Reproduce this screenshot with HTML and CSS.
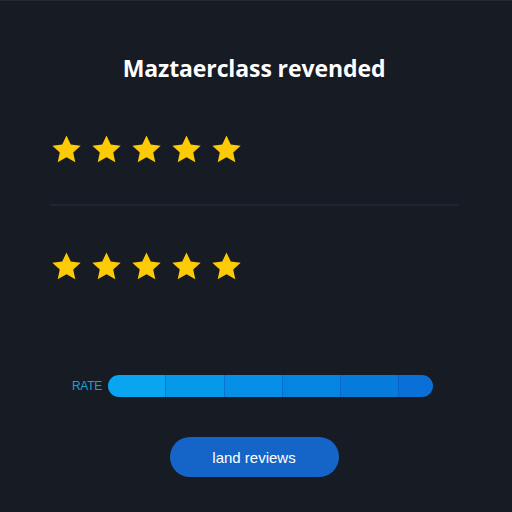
FILE: index.html
```html
<!DOCTYPE html>
<html lang="en">
<head>
    <meta charset="UTF-8">
    <meta name="viewport" content="width=device-width, initial-scale=1.0">
    <title>Masterclass reviews</title>
    <link rel="stylesheet" href="styles.css">
</head>
<body>
<div class="panel">
    <h1 class="title">Maztaerclass revended</h1>

    <div class="stars">
        <svg viewBox="0 0 24 24"><path d="M12 1.8l3.1 6.6 7.2.8-5.4 4.9 1.5 7.1L12 17.6l-6.4 3.6 1.5-7.1-5.4-4.9 7.2-.8z"/></svg>
        <svg viewBox="0 0 24 24"><path d="M12 1.8l3.1 6.6 7.2.8-5.4 4.9 1.5 7.1L12 17.6l-6.4 3.6 1.5-7.1-5.4-4.9 7.2-.8z"/></svg>
        <svg viewBox="0 0 24 24"><path d="M12 1.8l3.1 6.6 7.2.8-5.4 4.9 1.5 7.1L12 17.6l-6.4 3.6 1.5-7.1-5.4-4.9 7.2-.8z"/></svg>
        <svg viewBox="0 0 24 24"><path d="M12 1.8l3.1 6.6 7.2.8-5.4 4.9 1.5 7.1L12 17.6l-6.4 3.6 1.5-7.1-5.4-4.9 7.2-.8z"/></svg>
        <svg viewBox="0 0 24 24"><path d="M12 1.8l3.1 6.6 7.2.8-5.4 4.9 1.5 7.1L12 17.6l-6.4 3.6 1.5-7.1-5.4-4.9 7.2-.8z"/></svg>
    </div>

    <hr class="divider">

    <div class="stars second">
        <svg viewBox="0 0 24 24"><path d="M12 1.8l3.1 6.6 7.2.8-5.4 4.9 1.5 7.1L12 17.6l-6.4 3.6 1.5-7.1-5.4-4.9 7.2-.8z"/></svg>
        <svg viewBox="0 0 24 24"><path d="M12 1.8l3.1 6.6 7.2.8-5.4 4.9 1.5 7.1L12 17.6l-6.4 3.6 1.5-7.1-5.4-4.9 7.2-.8z"/></svg>
        <svg viewBox="0 0 24 24"><path d="M12 1.8l3.1 6.6 7.2.8-5.4 4.9 1.5 7.1L12 17.6l-6.4 3.6 1.5-7.1-5.4-4.9 7.2-.8z"/></svg>
        <svg viewBox="0 0 24 24"><path d="M12 1.8l3.1 6.6 7.2.8-5.4 4.9 1.5 7.1L12 17.6l-6.4 3.6 1.5-7.1-5.4-4.9 7.2-.8z"/></svg>
        <svg viewBox="0 0 24 24"><path d="M12 1.8l3.1 6.6 7.2.8-5.4 4.9 1.5 7.1L12 17.6l-6.4 3.6 1.5-7.1-5.4-4.9 7.2-.8z"/></svg>
    </div>

    <div class="rate">
        <span class="rate-label">RATE</span>
        <div class="rate-bar">
            <span class="seg s1"></span>
            <span class="seg s2"></span>
            <span class="seg s3"></span>
            <span class="seg s4"></span>
            <span class="seg s5"></span>
            <span class="seg s6"></span>
        </div>
    </div>

    <div class="buttons">
        <button type="button">land reviews</button>
    </div>
</div>
</body>
</html>
```

FILE: styles.css
```css
body {
    margin: 0;
    padding: 0;
    background: #161b24;
    font-family: "Liberation Sans", Arial, sans-serif;
    height: 512px;
    overflow: hidden;
}
.panel {
    padding: 53px 54px 0 50px;
    border-top: 1px solid #262b33;
}
.title {
    margin: 0;
    text-align: center;
    color: #ffffff;
    font-family: "Open Sans", sans-serif;
    font-weight: 700;
    font-size: 23px;
    line-height: 28px;
    letter-spacing: -0.1px;
}
.stars {
    display: flex;
    gap: 7px;
    margin-top: 51px;
}
.stars svg {
    width: 33px;
    height: 33px;
    fill: #fccb06;
}
.divider {
    border: none;
    height: 2px;
    background: #1e2430;
    margin: 38px 0 0 0;
}
.stars.second {
    margin-top: 44px;
}
.rate {
    display: flex;
    align-items: center;
    gap: 6px;
    margin-top: 92px;
    padding-left: 22px;
}
.rate-label {
    color: #16a4d2;
    font-size: 12px;
    letter-spacing: -0.3px;
}
.rate-bar {
    display: flex;
    width: 325px;
    height: 22px;
    border-radius: 11px;
    overflow: hidden;
}
.seg {
    height: 100%;
    border-right: 1px solid rgba(10, 70, 170, 0.45);
    box-sizing: border-box;
}
.s1 { width: 58px; background: #0aa5f0; }
.s2 { width: 59px; background: #0799e9; }
.s3 { width: 58px; background: #068fe6; }
.s4 { width: 58px; background: #0585e2; }
.s5 { width: 58px; background: #067bdc; }
.s6 { flex: 1; background: #0a6fd6; border-right: none; }
.buttons {
    text-align: center;
    margin-top: 40px;
}
button {
    width: 169px;
    height: 40px;
    background-color: #1565c8;
    color: #ffffff;
    border: none;
    border-radius: 20px;
    font-family: "Liberation Sans", Arial, sans-serif;
    font-size: 15px;
    cursor: pointer;
}
```
